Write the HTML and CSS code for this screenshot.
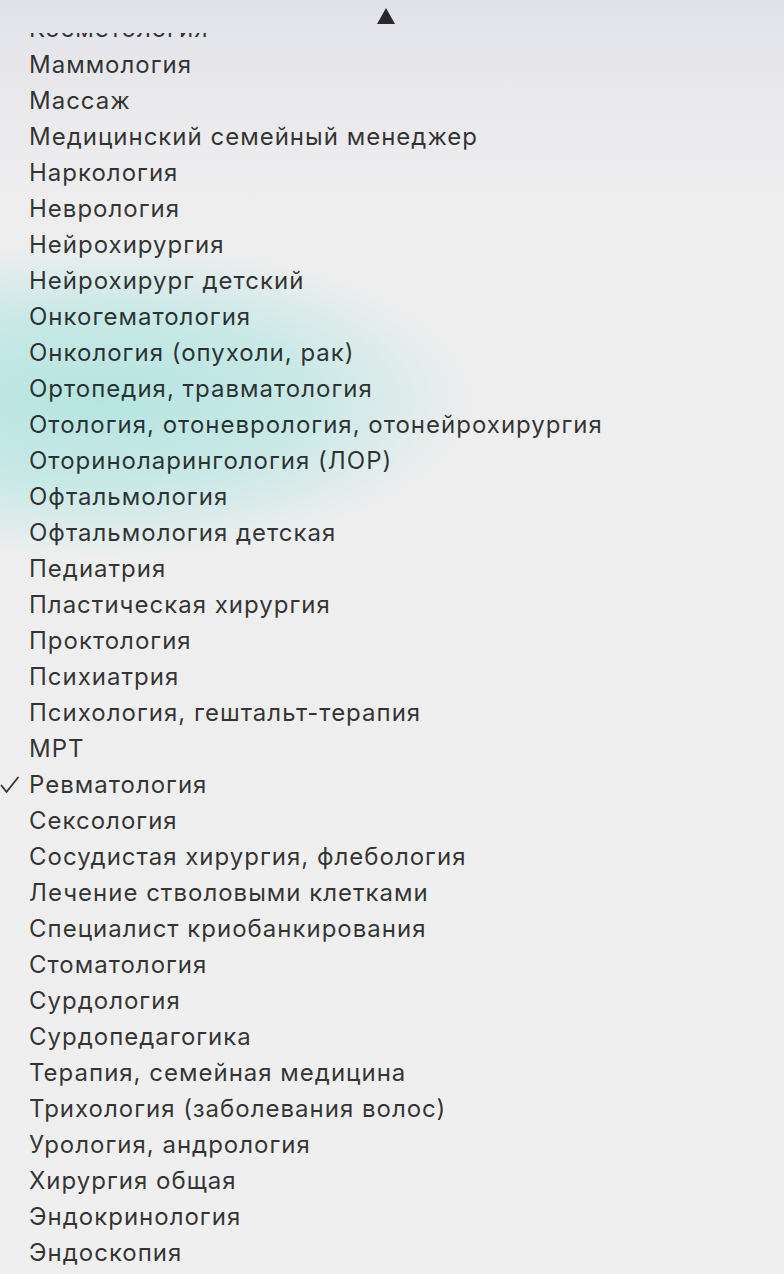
FILE: index.html
```html
<!DOCTYPE html>
<html lang="ru">
<head>
    <meta charset="UTF-8">
    <meta name="viewport" content="width=device-width, initial-scale=1.0">
    <link rel="stylesheet" href="styles.css">
</head>
<body>
    <div class="menu">
        <div class="glow"></div>
        <div class="scroll-up">
            <svg width="20" height="18" viewBox="0 0 20 18"><polygon points="10,1 19,17 1,17" fill="#2a2a2c"/></svg>
        </div>
        <div class="viewport">
            <ul class="items">
                <li>Косметология</li>
                <li>Маммология</li>
                <li>Массаж</li>
                <li>Медицинский семейный менеджер</li>
                <li>Наркология</li>
                <li>Неврология</li>
                <li>Нейрохирургия</li>
                <li>Нейрохирург детский</li>
                <li>Онкогематология</li>
                <li>Онкология (опухоли, рак)</li>
                <li>Ортопедия, травматология</li>
                <li>Отология, отоневрология, отонейрохирургия</li>
                <li>Оториноларингология (ЛОР)</li>
                <li>Офтальмология</li>
                <li>Офтальмология детская</li>
                <li>Педиатрия</li>
                <li>Пластическая хирургия</li>
                <li>Проктология</li>
                <li>Психиатрия</li>
                <li>Психология, гештальт-терапия</li>
                <li>МРТ</li>
                <li class="checked">
                    <svg class="check" width="20" height="18" viewBox="0 0 20 18"><polyline points="1.5,9.5 6.5,16 18,1.5" fill="none" stroke="#333" stroke-width="1.8" stroke-linecap="round" stroke-linejoin="round"/></svg>
                    Ревматология
                </li>
                <li>Сексология</li>
                <li>Сосудистая хирургия, флебология</li>
                <li>Лечение стволовыми клетками</li>
                <li>Специалист криобанкирования</li>
                <li>Стоматология</li>
                <li>Сурдология</li>
                <li>Сурдопедагогика</li>
                <li>Терапия, семейная медицина</li>
                <li>Трихология (заболевания волос)</li>
                <li>Урология, андрология</li>
                <li>Хирургия общая</li>
                <li>Эндокринология</li>
                <li>Эндоскопия</li>
            </ul>
        </div>
    </div>
</body>
</html>
```

FILE: styles.css
```css
html, body {
    margin: 0;
    padding: 0;
}
body {
    width: 784px;
    height: 1274px;
    overflow: hidden;
    font-family: "Inter", "Noto Sans", sans-serif;
}
.menu {
    position: relative;
    width: 784px;
    height: 1274px;
    overflow: hidden;
    background: linear-gradient(180deg, #e1e2e9 0px, #e9e9ec 90px, #eeeeef 200px, #efefef 100%);
}
/* бирюзовое пятно под меню */
.glow {
    position: absolute;
    left: -280px;
    top: 240px;
    width: 760px;
    height: 320px;
    background: radial-gradient(ellipse at center, rgba(178, 228, 224, 0.95) 0%, rgba(188, 231, 227, 0.75) 38%, rgba(230, 238, 238, 0) 70%);
}
.scroll-up {
    position: relative;
    height: 33px;
    display: flex;
    justify-content: center;
    padding-top: 7px;
    padding-right: 12px;
    box-sizing: border-box;
}
.viewport {
    position: relative;
    height: 1241px;
    overflow: hidden;
}
.items {
    list-style: none;
    margin: -22px 0 0 0;
    padding: 0;
}
.items li {
    height: 36px;
    line-height: 36px;
    padding-left: 29px;
    font-size: 24px;
    letter-spacing: 1px;
    color: rgba(0, 0, 0, 0.8);
    white-space: nowrap;
    position: relative;
}
.check {
    position: absolute;
    left: 0;
    top: 9px;
}
```
